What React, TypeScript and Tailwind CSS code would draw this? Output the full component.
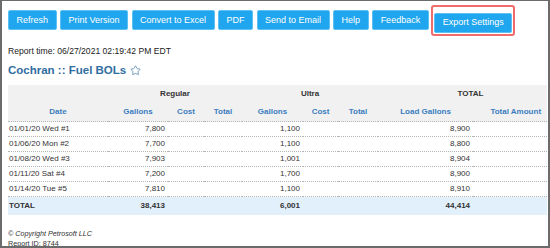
import React from "react";
import { Star } from "lucide-react";

const buttons = [
  "Refresh",
  "Print Version",
  "Convert to Excel",
  "PDF",
  "Send to Email",
  "Help",
  "Feedback",
];

const rows = [
  { date: "01/01/20 Wed #1", reg: "7,800", ultra: "1,100", load: "8,900" },
  { date: "01/06/20 Mon #2", reg: "7,700", ultra: "1,100", load: "8,800" },
  { date: "01/08/20 Wed #3", reg: "7,903", ultra: "1,001", load: "8,904" },
  { date: "01/11/20 Sat #4", reg: "7,200", ultra: "1,700", load: "8,900" },
  { date: "01/14/20 Tue #5", reg: "7,810", ultra: "1,100", load: "8,910" },
];

const Btn = ({ label }: { label: string }) => (
  <button
    type="button"
    className="h-[20px] px-[7.5px] rounded-[2px] border border-[#5cc0f3] bg-[#20a6ee] text-white text-[9px] leading-none"
  >
    {label}
  </button>
);

export default function App() {
  const cell = "h-[15px] border-b border-dotted border-[#b5b5b5] p-0 leading-none";
  const hd = "border-b border-dotted border-[#b5b5b5]";
  return (
    <div className="w-[550px] h-[248px] overflow-hidden bg-white border-t border-l-2 border-r-2 border-b-2 border-[#6b6b6b] font-['Liberation_Sans',Arial,sans-serif] text-[#333]">
      <div className="pl-[6px] pt-[7px]">
        <div className="flex items-center gap-[3.5px]">
          {buttons.map((b) => (
            <Btn key={b} label={b} />
          ))}
          <div className="-my-[3px] -ml-[1px] p-px border-2 border-[#f06b6b] rounded-[3px]">
            <Btn label="Export Settings" />
          </div>
        </div>

        <div className="mt-[14px] text-[8.6px] leading-none text-[#222]">
          Report time: 06/27/2021 02:19:42 PM EDT
        </div>

        <div className="mt-[10px] flex items-center gap-[4px] text-[11.5px] font-bold leading-none text-[#2f6e9f]">
          <span>Cochran :: Fuel BOLs</span>
          <Star size={11} strokeWidth={1.6} className="text-[#4a7ea8]" />
        </div>

        <table className="mt-[8px] w-[539px] table-fixed border-collapse text-[8px]">
          <colgroup>
            <col className="w-[100px]" />
            <col className="w-[60px]" />
            <col className="w-[36px]" />
            <col className="w-[38px]" />
            <col className="w-[61px]" />
            <col className="w-[35px]" />
            <col className="w-[40px]" />
            <col className="w-[95px]" />
            <col className="w-[74px]" />
          </colgroup>
          <thead className="bg-[#f1f1f1] font-bold">
            <tr className="h-[18px] text-[#333]">
              <th></th>
              <th colSpan={3} className="text-center">Regular</th>
              <th colSpan={3} className="text-center">Ultra</th>
              <th colSpan={2} className="text-center pl-[16px]">TOTAL</th>
            </tr>
            <tr className="h-[19px] text-[#3b7dbf]">
              <th className={`${hd} text-center`}>Date</th>
              <th className={`${hd} text-center`}>Gallons</th>
              <th className={`${hd} text-center`}>Cost</th>
              <th className={`${hd} text-center`}>Total</th>
              <th className={`${hd} text-center`}>Gallons</th>
              <th className={`${hd} text-center`}>Cost</th>
              <th className={`${hd} text-center`}>Total</th>
              <th className={`${hd} text-center`}>Load Gallons</th>
              <th className={`${hd} text-right pr-[6px]`}>Total Amount</th>
            </tr>
          </thead>
          <tbody>
            {rows.map((r) => (
              <tr key={r.date}>
                <td className={`${cell} pl-px`}>{r.date}</td>
                <td className={`${cell} text-right pr-[3px]`}>{r.reg}</td>
                <td className={cell}></td>
                <td className={cell}></td>
                <td className={`${cell} text-right pr-[3px]`}>{r.ultra}</td>
                <td className={cell}></td>
                <td className={cell}></td>
                <td className={`${cell} text-right pr-[3px]`}>{r.load}</td>
                <td className={cell}></td>
              </tr>
            ))}
            <tr className="h-[18px] bg-[#e2f0fb] font-bold">
              <td className="pl-px">TOTAL</td>
              <td className="text-right pr-[3px]">38,413</td>
              <td></td>
              <td></td>
              <td className="text-right pr-[3px]">6,001</td>
              <td></td>
              <td></td>
              <td className="text-right pr-[3px]">44,414</td>
              <td></td>
            </tr>
          </tbody>
        </table>

        <div className="mt-[14px] text-[7.2px] leading-[10px] text-[#333]">
          <div className="italic">© Copyright Petrosoft LLC</div>
          <div>Report ID: 8744</div>
        </div>
      </div>
    </div>
  );
}
